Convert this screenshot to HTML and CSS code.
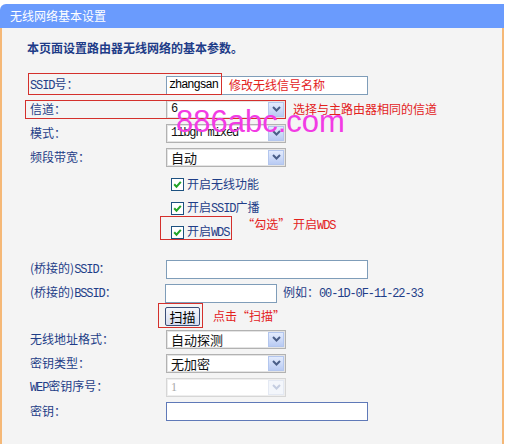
FILE: index.html
```html
<!DOCTYPE html>
<html lang="zh">
<head>
<meta charset="utf-8">
<title>无线网络基本设置</title>
<link rel="stylesheet" href="styles.css">
</head>
<body>
<div class="panel">
  <div class="panel-head">无线网络基本设置</div>
  <div class="panel-body">
    <p class="intro">本页面设置路由器无线网络的基本参数。</p>
    <div class="form">
      <div class="row">
        <div class="label"><span class="en">SSID</span>号：</div>
        <div class="text-input mono">zhangsan</div>
        <span class="note note-ssid">修改无线信号名称</span>
        <span class="mark mark-ssid"></span>
      </div>
      <div class="row">
        <div class="label">信道：</div>
        <div class="select"><span class="mono">6</span><span class="arrow"><svg width="9" height="6" viewBox="0 0 9 6"><path d="M1 1 L4.5 4.5 L8 1" fill="none" stroke="#4a5e88" stroke-width="2"/></svg></span></div>
        <span class="note note-channel">选择与主路由器相同的信道</span>
        <span class="mark mark-channel"></span>
      </div>
      <div class="row">
        <div class="label">模式：</div>
        <div class="select"><span class="mono">11bgn mixed</span><span class="arrow"><svg width="9" height="6" viewBox="0 0 9 6"><path d="M1 1 L4.5 4.5 L8 1" fill="none" stroke="#4a5e88" stroke-width="2"/></svg></span></div>
      </div>
      <div class="row">
        <div class="label">频段带宽：</div>
        <div class="select"><span>自动</span><span class="arrow"><svg width="9" height="6" viewBox="0 0 9 6"><path d="M1 1 L4.5 4.5 L8 1" fill="none" stroke="#4a5e88" stroke-width="2"/></svg></span></div>
      </div>

      <div class="group-check">
        <div class="row check-row">
          <span class="cb"><svg width="9" height="9" viewBox="0 0 9 9"><path d="M1.2 4.3 L3.5 6.7 L7.8 1.8" fill="none" stroke="#22a328" stroke-width="2"/></svg></span>
          <span class="cb-text">开启无线功能</span>
        </div>
        <div class="row check-row">
          <span class="cb"><svg width="9" height="9" viewBox="0 0 9 9"><path d="M1.2 4.3 L3.5 6.7 L7.8 1.8" fill="none" stroke="#22a328" stroke-width="2"/></svg></span>
          <span class="cb-text">开启<span class="en">SSID</span>广播</span>
        </div>
        <div class="row check-row">
          <span class="cb"><svg width="9" height="9" viewBox="0 0 9 9"><path d="M1.2 4.3 L3.5 6.7 L7.8 1.8" fill="none" stroke="#22a328" stroke-width="2"/></svg></span>
          <span class="cb-text">开启<span class="en">WDS</span></span>
          <span class="note note-wds">“勾选” 开启<span class="en">WDS</span></span>
          <span class="mark mark-wds"></span>
        </div>
      </div>

      <div class="group-bridge">
        <div class="row">
          <div class="label">(桥接的)<span class="en">SSID</span>：</div>
          <div class="text-input"></div>
        </div>
        <div class="row">
          <div class="label">(桥接的)<span class="en">BSSID</span>：</div>
          <div class="text-input input-short"></div>
          <span class="example">例如：<span class="en">00-1D-0F-11-22-33</span></span>
        </div>
        <div class="row row-btn">
          <div class="label"></div>
          <button class="btn" type="button">扫描</button>
          <span class="note note-scan">点击“扫描”</span>
          <span class="mark mark-scan"></span>
        </div>
        <div class="row">
          <div class="label">无线地址格式：</div>
          <div class="select"><span>自动探测</span><span class="arrow"><svg width="9" height="6" viewBox="0 0 9 6"><path d="M1 1 L4.5 4.5 L8 1" fill="none" stroke="#4a5e88" stroke-width="2"/></svg></span></div>
        </div>
        <div class="row">
          <div class="label">密钥类型：</div>
          <div class="select"><span>无加密</span><span class="arrow"><svg width="9" height="6" viewBox="0 0 9 6"><path d="M1 1 L4.5 4.5 L8 1" fill="none" stroke="#4a5e88" stroke-width="2"/></svg></span></div>
        </div>
        <div class="row">
          <div class="label"><span class="en">WEP</span>密钥序号：</div>
          <div class="select disabled"><span class="serif">1</span><span class="arrow"><svg width="9" height="6" viewBox="0 0 9 6"><path d="M1 1 L4.5 4.5 L8 1" fill="none" stroke="#c4cde0" stroke-width="2"/></svg></span></div>
        </div>
        <div class="row">
          <div class="label">密钥：</div>
          <div class="text-input input-key"></div>
        </div>
      </div>
    </div>
  </div>
  <div class="watermark">886abc.com</div>
</div>
</body>
</html>
```

FILE: styles.css
```css
body {
  margin: 0;
  background: #ffffff;
  font-family: "Noto Sans CJK SC", "Noto Sans", sans-serif;
  font-size: 12px;
}

.panel {
  position: relative;
  margin-top: 4px;
  width: 504px;
}

.panel-head {
  height: 24px;
  background: #6a9bfd;
  border-radius: 6px 0 0 0;
  color: #ffffff;
  padding-left: 10px;
  line-height: 24px;
  font-size: 12px;
}

.panel-body {
  height: 416px;
  box-sizing: border-box;
  background: #f4f4f4;
  border-left: 2px solid #f5b877;
  border-right: 2px solid #f5b877;
}

.intro {
  margin: 0;
  padding: 12px 0 0 25px;
  line-height: 16px;
  color: #1e3c88;
  font-weight: bold;
}

.form {
  margin-top: 17px;
}

.row {
  position: relative;
  display: flex;
  align-items: center;
  height: 24px;
}

.label {
  flex: none;
  width: 164px;
  box-sizing: border-box;
  padding-left: 28px;
  color: #1f3e88;
  line-height: 16px;
}

.en {
  font-family: "Liberation Mono", monospace;
  font-size: 12px;
  letter-spacing: -1.1px;
}

.mono {
  font-family: "Liberation Mono", monospace;
  font-size: 12px;
  letter-spacing: -1.1px;
}

.serif {
  font-family: "Liberation Serif", serif;
  font-size: 12px;
}

.text-input {
  width: 202px;
  height: 19px;
  box-sizing: border-box;
  border: 1px solid #7f9db9;
  background: #ffffff;
  padding: 0 2px;
  line-height: 17px;
  color: #000000;
}

.input-short {
  width: 112px;
  margin-left: -1px;
}

.input-key {
  border-color: #5f79b8;
}

.select {
  display: flex;
  align-items: center;
  justify-content: space-between;
  width: 120px;
  height: 19px;
  box-sizing: border-box;
  border: 1px solid #b2b2b2;
  box-shadow: inset 0 0 0 1px #e4e4e4;
  background: #ffffff;
  padding: 0 1px 0 4px;
  font-size: 13px;
  line-height: 17px;
  color: #111111;
}

.arrow {
  display: flex;
  align-items: center;
  justify-content: center;
  width: 16px;
  height: 15px;
  box-sizing: border-box;
  border: 1px solid #b3c6ee;
  background: linear-gradient(#e3ebfd, #b9cbf3);
}

.select.disabled {
  border-color: #d6d6d6;
  box-shadow: inset 0 0 0 1px #eeeeee;
  color: #a8a8a8;
}

.select.disabled .arrow {
  border-color: #e4e9f3;
  background: #f3f6fb;
}

.group-check {
  margin-top: 3px;
}

.check-row {
  padding-left: 169px;
}

.cb {
  display: flex;
  align-items: center;
  justify-content: center;
  width: 13px;
  height: 13px;
  box-sizing: border-box;
  border: 1px solid #1c5180;
  background: #ffffff;
  margin-right: 3px;
}

.cb-text {
  color: #1f3e88;
  line-height: 16px;
}

.group-bridge {
  margin-top: 13px;
}

.row-btn {
  height: 22px;
}

.btn {
  width: 35px;
  height: 19px;
  margin: 0 0 0 -1px;
  padding: 0;
  border: 1px solid #3a4d78;
  border-radius: 2px;
  background: linear-gradient(#f5f7fc, #d6dcef);
  font-family: "Noto Sans CJK SC", sans-serif;
  font-size: 13px;
  line-height: 17px;
  color: #000000;
}

.example {
  margin-left: 6px;
  color: #1f3e88;
  line-height: 16px;
}

.note {
  color: #e3221d;
  font-size: 12px;
  line-height: 16px;
}

.note-ssid {
  position: absolute;
  left: 227px;
  top: 4px;
}

.note-channel {
  margin-left: 7px;
}

.note-wds {
  margin-left: 13px;
  margin-bottom: 14px;
}

.note-scan {
  margin-left: 13px;
}

.mark {
  position: absolute;
  box-sizing: border-box;
  border: 1px solid #d4302c;
  pointer-events: none;
}

.mark-ssid {
  left: 26px;
  top: 0;
  width: 194px;
  height: 22px;
}

.mark-channel {
  left: 23px;
  top: 3px;
  width: 261px;
  height: 19px;
}

.mark-wds {
  left: 158px;
  top: -4px;
  width: 72px;
  height: 24px;
}

.mark-scan {
  left: 156px;
  top: -2px;
  width: 45px;
  height: 25px;
}

.watermark {
  position: absolute;
  left: 176px;
  top: 102px;
  font-family: "Liberation Sans", Arial, sans-serif;
  font-size: 31px;
  line-height: 31px;
  color: #f23be4;
  pointer-events: none;
}
```
